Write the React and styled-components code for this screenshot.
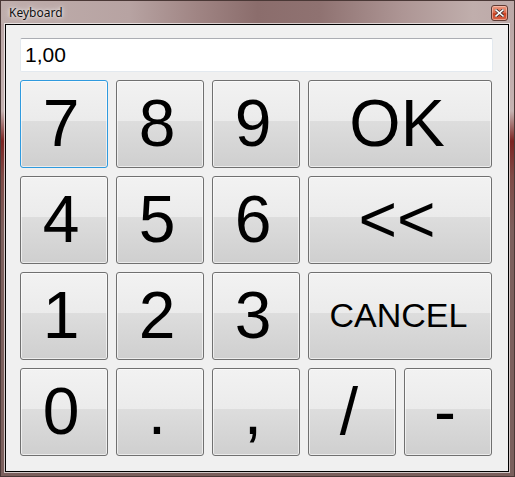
import React from "react";
import styled, { createGlobalStyle, css } from "styled-components";

const Global = createGlobalStyle`
  html, body { margin: 0; padding: 0; background: #ffffff; }
  * { box-sizing: border-box; }
`;

const Window = styled.div`
  width: 515px;
  height: 477px;
  display: flex;
  flex-direction: column;
  border: 1px solid #4a3836;
  padding: 0 5px 4px 4px;
  background: linear-gradient(180deg, #b9a5a4 0px, #c6b3b2 110px, #7c2422 140px, #7f4a46 175px, #7d605d 230px, #7b605d 100%);
`;

const TitleBar = styled.div`
  height: 23px;
  margin: 0 -5px 0 -4px;
  padding: 0 6px 0 8px;
  display: flex;
  align-items: center;
  justify-content: space-between;
  background: linear-gradient(90deg, #bfaeac 0%, #b7a3a2 25%, #a08584 38%, #8b6d6c 50%, #8f7271 62%, #ad9594 78%, #c0aeac 92%, #bca9a8 100%);
`;

const Title = styled.span`
  font-family: "Noto Sans", "Open Sans", sans-serif;
  font-size: 12px;
  color: #111;
  text-shadow: 0 0 6px rgba(255, 255, 255, 0.9), 0 0 3px rgba(255, 255, 255, 0.8);
  margin-top: -1px;
`;

const CloseButton = styled.div`
  width: 17px;
  height: 16px;
  border: 1px solid #5e3a33;
  border-radius: 3px;
  background: linear-gradient(180deg, #eb9a82 0%, #de6f52 45%, #c8401f 55%, #d8664a 100%);
  box-shadow: inset 0 0 0 1px rgba(255, 220, 210, 0.5);
  display: flex;
  align-items: center;
  justify-content: center;
`;

const Client = styled.div`
  flex: 1;
  display: flex;
  flex-direction: column;
  gap: 8px;
  padding: 13px 15px 14px 14px;
  background: #f0f0f0;
  border: 1px solid #000;
  box-shadow: 0 0 0 1px rgba(255, 255, 255, 0.65);
`;

const Field = styled.div`
  height: 34px;
  width: 473px;
  background: #fff;
  border: 1px solid #e3e9ef;
  border-top-color: #abadb3;
  border-radius: 2px;
  display: flex;
  align-items: center;
  padding-left: 4px;
  font-family: "Liberation Sans", Arial, sans-serif;
  font-size: 21px;
  color: #000;
`;

const Pad = styled.div`
  display: grid;
  grid-template-columns: repeat(5, 88px);
  grid-auto-rows: 88px;
  gap: 8px;
`;

const Key = styled.button`
  grid-column: span ${(p) => p.$span || 1};
  border: 1px solid #707070;
  border-radius: 3px;
  background: linear-gradient(180deg, #f2f2f2 0%, #ebebeb 47%, #dddddd 47%, #cfcfcf 100%);
  box-shadow: inset 0 0 0 1px rgba(255, 255, 255, 0.6);
  padding: 0 0.09em 0 0;
  margin: 0;
  display: flex;
  align-items: center;
  justify-content: center;
  font-family: "Liberation Sans", Arial, sans-serif;
  font-size: ${(p) => p.$size || 66}px;
  line-height: 1;
  color: #000;
  ${(p) =>
    p.$focused &&
    css`
      border-color: #2f9ade;
    `}
`;

const Label = styled.span`
  display: block;
  margin-top: -2px;
`;

const keys = [
  { t: "7", focused: true },
  { t: "8" },
  { t: "9" },
  { t: "OK", span: 2 },
  { t: "4" },
  { t: "5" },
  { t: "6" },
  { t: "<<", span: 2 },
  { t: "1" },
  { t: "2" },
  { t: "3" },
  { t: "CANCEL", span: 2, size: 34 },
  { t: "0" },
  { t: "." },
  { t: "," },
  { t: "/" },
  { t: "-" },
];

export default function App() {
  return (
    <>
      <Global />
      <Window>
        <TitleBar>
          <Title>Keyboard</Title>
          <CloseButton>
            <svg width="9" height="8" viewBox="0 0 9 8">
              <path d="M1 1 L8 7 M8 1 L1 7" stroke="#3a2a2a" strokeWidth="3" strokeLinecap="square" />
              <path d="M1 1 L8 7 M8 1 L1 7" stroke="#ffffff" strokeWidth="1.6" strokeLinecap="square" />
            </svg>
          </CloseButton>
        </TitleBar>
        <Client>
          <Field>1,00</Field>
          <Pad>
            {keys.map((k, i) => (
              <Key key={i} $span={k.span} $size={k.size} $focused={k.focused}>
                <Label>{k.t}</Label>
              </Key>
            ))}
          </Pad>
        </Client>
      </Window>
    </>
  );
}
